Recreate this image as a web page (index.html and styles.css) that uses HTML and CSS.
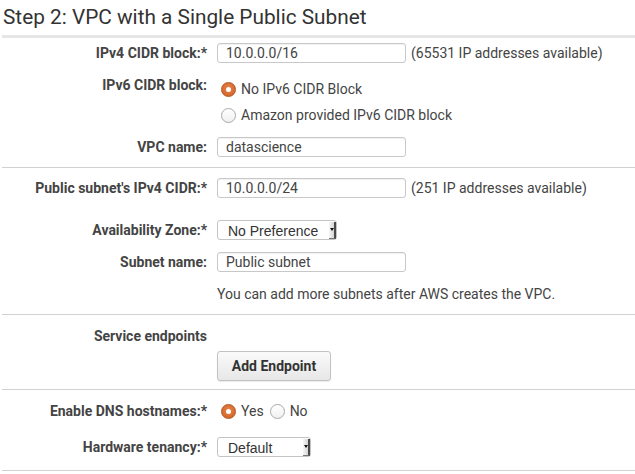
FILE: index.html
```html
<!DOCTYPE html>
<html>
<head>
<meta charset="utf-8">
<link rel="stylesheet" href="styles.css">
</head>
<body>
<div class="page">
  <h2 class="title">Step 2: VPC with a Single Public Subnet</h2>

  <div class="section s1">
    <div class="row">
      <label class="lbl">IPv4 CIDR block:*</label>
      <div class="ctl"><input class="txt" type="text" value="10.0.0.0/16"><span class="hint">(65531 IP addresses available)</span></div>
    </div>
    <div class="row top gap-r">
      <label class="lbl">IPv6 CIDR block:</label>
      <div class="radios">
        <label class="opt"><input type="radio" name="v6" checked><span>No IPv6 CIDR Block</span></label>
        <label class="opt"><input type="radio" name="v6"><span>Amazon provided IPv6 CIDR block</span></label>
      </div>
    </div>
    <div class="row gap-r">
      <label class="lbl">VPC name:</label>
      <div class="ctl"><input class="txt" type="text" value="datascience"></div>
    </div>
  </div>

  <div class="section s2">
    <div class="row">
      <label class="lbl">Public subnet's IPv4 CIDR:*</label>
      <div class="ctl"><input class="txt" type="text" value="10.0.0.0/24"><span class="hint">(251 IP addresses available)</span></div>
    </div>
    <div class="row az">
      <label class="lbl">Availability Zone:*</label>
      <div class="ctl"><div class="sel w-az"><span class="val">No Preference</span><span class="arrow"></span></div></div>
    </div>
    <div class="row gap-r">
      <label class="lbl">Subnet name:</label>
      <div class="ctl"><input class="txt" type="text" value="Public subnet"></div>
    </div>
    <div class="row gap-r">
      <span class="lbl"></span>
      <div class="note">You can add more subnets after AWS creates the VPC.</div>
    </div>
  </div>

  <div class="section s3">
    <div class="row">
      <label class="lbl">Service endpoints</label>
      <span></span>
    </div>
    <div class="row btn-row">
      <span class="lbl"></span>
      <div class="ctl"><button class="btn" type="button">Add Endpoint</button></div>
    </div>
  </div>

  <div class="section s4">
    <div class="row">
      <label class="lbl">Enable DNS hostnames:*</label>
      <div class="inline-radios">
        <label class="opt"><input type="radio" name="dns" checked><span>Yes</span></label>
        <label class="opt"><input type="radio" name="dns"><span>No</span></label>
      </div>
    </div>
    <div class="row ten">
      <label class="lbl">Hardware tenancy:*</label>
      <div class="ctl"><div class="sel w-ten"><span class="val">Default</span><span class="arrow"></span></div></div>
    </div>
  </div>
</div>
</body>
</html>
```

FILE: styles.css
```css
* { box-sizing: border-box; }
html, body { margin: 0; padding: 0; background: #fff; }
body {
  font-family: Roboto, "Liberation Sans", Arial, sans-serif;
  font-size: 14px;
  color: #444;
}
.page { padding: 0 0 0 2px; width: 635px; }
.title {
  margin: 0;
  padding: 4px 0 0 1px;
  font-size: 20.8px;
  font-weight: 400;
  color: #333;
  line-height: 26px;
  border-bottom: 3px solid #e6e6e6;
  height: 38px;
}
.section { border-bottom: 1px solid #d2d2d2; }
.s1 { padding: 5px 0 10px; }
.s2 { padding: 10px 0 10px; }
.s3 { padding: 11px 0 8px; }
.s4 { padding: 11px 0 13px; }

.row {
  display: grid;
  grid-template-columns: 205px 1fr;
  column-gap: 10px;
  align-items: center;
  min-height: 20px;
}
.row.top { align-items: start; }
.gap-r { margin-top: 12px; }
.az { margin-top: 22px; }
.btn-row { margin-top: 5px; }
.ten { margin-top: 16px; }

.lbl {
  text-align: right;
  font-weight: 700;
  color: #444;
  line-height: 20px;
}
.ctl { display: flex; align-items: center; }
.txt {
  width: 189px;
  height: 20px;
  border: 1px solid #c8c8c8;
  border-radius: 3px;
  padding: 0 8px;
  font-family: Roboto, "Liberation Sans", sans-serif;
  font-size: 14px;
  color: #444;
  background: #fff;
  box-shadow: inset 0 1px 1px rgba(0,0,0,0.06);
  outline: none;
}
.hint { margin-left: 5px; color: #444; }
.note { color: #444; line-height: 20px; }

.radios { display: flex; flex-direction: column; row-gap: 6px; padding-top: 4px; }
.inline-radios { display: flex; align-items: center; column-gap: 5px; }
.opt { display: flex; align-items: center; line-height: 20px; color: #444; }
.opt input {
  -webkit-appearance: none;
  appearance: none;
  width: 15px;
  height: 15px;
  margin: 0 5px 0 4px;
  border-radius: 50%;
  border: 1px solid #a9a9a9;
  background: linear-gradient(#fff, #f0f0f0);
  position: relative;
}
.inline-radios .opt + .opt input { margin-left: 1px; }
.opt input:checked {
  border: 1px solid #b4531c;
  background: radial-gradient(circle at 50% 40%, #e8834a, #cc5f24);
}
.opt input:checked::after {
  content: "";
  position: absolute;
  left: 4px; top: 4px;
  width: 5px; height: 5px;
  border-radius: 50%;
  background: #fff;
}

.sel {
  display: flex;
  align-items: center;
  height: 20px;
  border: 1px solid #c4c4c4;
  border-radius: 3px;
  background: #fff;
  font-family: "Liberation Sans", Arial, sans-serif;
  font-size: 14px;
  color: #333;
  padding-left: 10px;
  position: relative;
}
.w-az { width: 120px; }
.w-ten { width: 94px; }
.sel .val { flex: 1; padding-top: 2px; }
.sel .arrow {
  width: 7px;
  height: 17px;
  margin-right: 0;
  background: linear-gradient(90deg, #f6f6f6, #d6d6d6);
  border-right: 2px solid #4a4a4a;
  border-bottom: 1px solid #777;
  position: relative;
}
.sel .arrow::after {
  content: "";
  position: absolute;
  left: 1px; top: 6px;
  border-left: 2.5px solid transparent;
  border-right: 2.5px solid transparent;
  border-top: 3px solid #111;
}

.btn {
  width: 114px;
  height: 30px;
  border: 1px solid #c2c2c2;
  border-radius: 3px;
  background: linear-gradient(#fafafa, #e7e7e7);
  font-family: Roboto, "Liberation Sans", sans-serif;
  font-size: 14px;
  font-weight: 700;
  color: #333;
  box-shadow: 0 1px 1px rgba(0,0,0,0.08);
  padding: 0;
}
```
